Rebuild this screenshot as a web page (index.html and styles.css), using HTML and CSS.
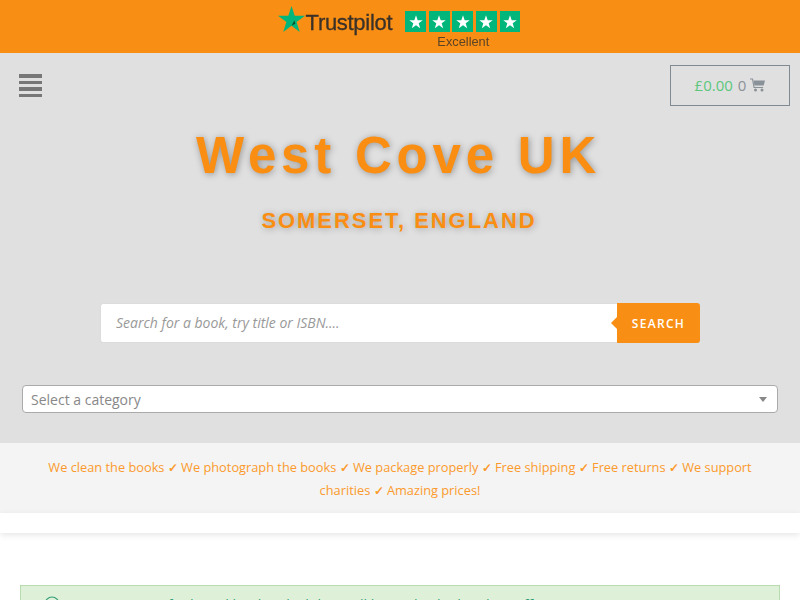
FILE: index.html
```html
<!DOCTYPE html>
<html lang="en">
<head>
<meta charset="utf-8">
<title>West Cove UK</title>
<link rel="stylesheet" href="styles.css">
</head>
<body>
<div class="page">
<div class="topbar">
  <div class="tp">
    <svg class="tp-star" viewBox="0 0 28 27" width="27" height="26"><polygon fill="#00b67a" points="14,0 17.3,10.2 28,10.2 19.3,16.5 22.6,27 14,20.5 5.4,27 8.7,16.5 0,10.2 10.7,10.2"/><polygon fill="#005128" points="17,15 18,18.5 14,20.5"/></svg>
    <span class="tp-name">Trustpilot</span>
    <div class="tp-rating">
      <div class="tp-stars">
        <span class="tp-box"><svg viewBox="0 0 16 16" width="18" height="18"><polygon fill="#fff" points="8,2 9.5,6.4 14,6.4 10.4,9.1 11.7,13.5 8,10.8 4.3,13.5 5.6,9.1 2,6.4 6.5,6.4"/></svg></span>
        <span class="tp-box"><svg viewBox="0 0 16 16" width="18" height="18"><polygon fill="#fff" points="8,2 9.5,6.4 14,6.4 10.4,9.1 11.7,13.5 8,10.8 4.3,13.5 5.6,9.1 2,6.4 6.5,6.4"/></svg></span>
        <span class="tp-box"><svg viewBox="0 0 16 16" width="18" height="18"><polygon fill="#fff" points="8,2 9.5,6.4 14,6.4 10.4,9.1 11.7,13.5 8,10.8 4.3,13.5 5.6,9.1 2,6.4 6.5,6.4"/></svg></span>
        <span class="tp-box"><svg viewBox="0 0 16 16" width="18" height="18"><polygon fill="#fff" points="8,2 9.5,6.4 14,6.4 10.4,9.1 11.7,13.5 8,10.8 4.3,13.5 5.6,9.1 2,6.4 6.5,6.4"/></svg></span>
        <span class="tp-box"><svg viewBox="0 0 16 16" width="18" height="18"><polygon fill="#fff" points="8,2 9.5,6.4 14,6.4 10.4,9.1 11.7,13.5 8,10.8 4.3,13.5 5.6,9.1 2,6.4 6.5,6.4"/></svg></span>
      </div>
      <span class="tp-excellent">Excellent</span>
    </div>
  </div>
</div>
<header class="hero">
  <div class="navrow">
    <div class="burger"><span></span><span></span><span></span><span></span></div>
    <div class="cart"><span class="cart-amt">£0.00</span> <span class="cart-count">0</span>
      <svg class="cart-icon" viewBox="0 0 15 14" width="15" height="14"><path fill="none" stroke="#8a9299" stroke-width="1.2" d="M0 1h2.5l1.6 8.5h9"/><path fill="#8a9299" d="M3.5 2.5H15l-1.3 5H4.5z"/><circle fill="#8a9299" cx="5.5" cy="12" r="1.5"/><circle fill="#8a9299" cx="12" cy="12" r="1.5"/></svg>
    </div>
  </div>
  <h1 class="title">West Cove UK</h1>
  <h2 class="subtitle">SOMERSET, ENGLAND</h2>
  <form class="search">
    <div class="search-input">Search for a book, try title or ISBN....</div>
    <div class="search-btn">SEARCH</div>
  </form>
  <div class="select"><span>Select a category</span><i class="caret"></i></div>
</header>
<div class="usp">We clean the books <span class="check">✓</span> We photograph the books <span class="check">✓</span> We package properly <span class="check">✓</span> Free shipping <span class="check">✓</span> Free returns <span class="check">✓</span> We support charities <span class="check">✓</span> Amazing prices!</div>
<div class="strip"></div>
<div class="content">
  <div class="notice">
    <svg class="notice-icon" viewBox="0 0 16 16" width="16" height="16"><circle cx="8" cy="8" r="7" fill="none" stroke="#2f9e77" stroke-width="1.2"/></svg>
    <span class="notice-text">Our customers find used books which have all been checked and we offer</span>
  </div>
</div>
</div>
</body>
</html>
```
FILE: styles.css
```css
* { box-sizing: border-box; }
html, body { margin: 0; padding: 0; }
body { font-family: "Open Sans", sans-serif; background: #fff; overflow: hidden; }
.page { height: 600px; overflow: hidden; }
.topbar { height: 53px; background: #f88e14; display: flex; justify-content: center; }
.tp { display: flex; align-items: flex-start; margin-left: -2px; filter: blur(0.35px); }
.tp-star { margin-top: 6px; }
.tp-name { font-family: "Liberation Sans", sans-serif; font-size: 22px; letter-spacing: -0.3px; color: #3a3128; margin: 10px 0 0 1px; line-height: 26px; -webkit-text-stroke: 0.3px #3a3128; }
.tp-rating { margin: 11px 0 0 13px; display: flex; flex-direction: column; align-items: center; }
.tp-stars { display: flex; gap: 2.8px; }
.tp-box { width: 20.8px; height: 21px; background: #00b67a; display: flex; align-items: center; justify-content: center; }
.tp-excellent { font-family: "Liberation Sans", sans-serif; font-size: 12.8px; color: #5a4426; line-height: 14px; margin: 3px 0 0 1px; }
.hero { height: 390px; background: #e0e0e0; display: flex; flex-direction: column; align-items: center; padding: 0 22px; }
.navrow { align-self: stretch; display: flex; justify-content: space-between; align-items: flex-start; margin: 0 -12px 0 -3px; }
.burger { margin-top: 21px; width: 23px; display: flex; flex-direction: column; gap: 3px; }
.burger span { height: 3.5px; background: #777; }
.cart { margin-top: 12px; width: 120px; height: 41px; border: 1px solid #7f8a93; display: flex; align-items: center; justify-content: center; gap: 4px; font-size: 15px; color: #8a9299; white-space: pre; padding-bottom: 1px; }
.cart-amt { color: #5cc77d; }
.cart-count { margin-left: 1px; }
.title { margin: 21px 3px 0 0; font-family: "Liberation Sans", sans-serif; font-weight: 700; font-size: 51px; line-height: 58px; letter-spacing: 4.8px; color: #f98e13; text-shadow: 1px 1px 7px rgba(0,0,0,.35); }
.subtitle { margin: 22px 2px 0 0; font-family: "Liberation Sans", sans-serif; font-weight: 700; font-size: 22px; line-height: 28px; letter-spacing: 1.95px; color: #f98e13; text-shadow: 1px 1px 7px rgba(0,0,0,.3); }
.search { margin-top: 68px; width: 600px; height: 40px; display: flex; }
.search-input { flex: 1; background: #fff; border: 1px solid #dcdcdc; border-right: 0; border-radius: 3px 0 0 3px; padding: 0 15px 2px; font-size: 14px; font-style: italic; color: #999; display: flex; align-items: center; }
.search-btn { position: relative; width: 83px; background: #f88e14; color: #fff; border-radius: 0 3px 3px 0; font-size: 12px; font-weight: 600; letter-spacing: 1.3px; display: flex; align-items: center; justify-content: center; }
.search-btn::before { content: ""; position: absolute; left: -6px; top: 14px; border-style: solid; border-width: 6px 6px 6px 0; border-color: transparent #f88e14 transparent transparent; }
.select { margin-top: 42px; align-self: stretch; height: 28px; background: #fff; border: 1px solid #aaa; border-radius: 4px; padding: 0 8px; display: flex; align-items: center; justify-content: space-between; font-size: 14px; color: #888; }
.caret { border-style: solid; border-width: 5px 4px 0 4px; border-color: #888 transparent transparent transparent; margin-right: 2px; }
.usp { height: 70px; background: #f4f4f4; padding: 13px 40px 0; text-align: center; font-size: 12.8px; line-height: 23px; color: #fb9a2c; }
.check { font-size: 12.3px; font-weight: 700; line-height: 1; }
.strip { height: 20px; background: #fff; box-shadow: 0 2px 6px rgba(0,0,0,.1); }
.content { padding: 52px 20px 0; }
.notice { height: 60px; background: #dff0d8; border: 1px solid #b8dcb0; padding: 7px 0 0 23px; display: flex; gap: 7px; font-size: 14px; color: #2f9e77; }
.notice-icon { flex: none; margin-top: 3px; }
.notice-text { margin-top: 2px; }
```
